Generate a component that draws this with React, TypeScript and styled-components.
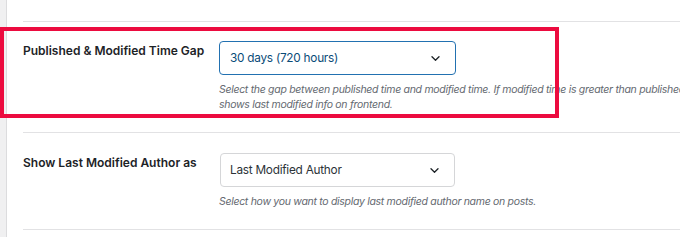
import React from "react";
import styled, { createGlobalStyle } from "styled-components";

const Global = createGlobalStyle`
  html, body { margin: 0; padding: 0; background: #ffffff; overflow: hidden; }
  body { font-family: Inter, "Noto Sans", "Liberation Sans", sans-serif; width: 680px; height: 237px; }
`;

const Page = styled.div`
  position: relative;
  display: flex;
  width: 680px;
  height: 237px;
  overflow: hidden;
`;

const SideStrip = styled.div`
  flex: 0 0 6px;
  background: #f0f0f1;
  border-right: 1px solid #dcdcde;
`;

const Main = styled.div`
  flex: 1;
  padding-left: 16px;
  padding-top: 21px;
  display: flex;
  flex-direction: column;
`;

const Row = styled.div<{ $padTop: number; $padBottom: number }>`
  display: grid;
  grid-template-columns: 196px 1fr;
  border-top: 1px solid #e2e2e4;
  padding-top: ${(p) => p.$padTop}px;
  padding-bottom: ${(p) => p.$padBottom}px;
  &:last-child { border-bottom: 1px solid #e2e2e4; }
`;

const Label = styled.div`
  font-size: 12px;
  font-weight: 600;
  color: #1d2327;
  line-height: 16px;
  padding-top: 2px;
  white-space: nowrap;
`;

const Field = styled.div`
  display: flex;
  flex-direction: column;
  min-width: 0;
`;

const Select = styled.div<{ $active?: boolean }>`
  box-sizing: border-box;
  width: ${(p) => (p.$active ? 237 : 235)}px;
  margin-left: ${(p) => (p.$active ? 0 : 1)}px;
  height: 34px;
  border: 1px solid ${(p) => (p.$active ? "#2271b1" : "#d5d6d8")};
  border-radius: 4px;
  display: flex;
  align-items: center;
  justify-content: space-between;
  padding: 0 15px 0 ${(p) => (p.$active ? 10 : 9)}px;
  font-size: 11.8px;
  letter-spacing: -0.25px;
  color: ${(p) => (p.$active ? "#0a4b78" : "#2c3338")};
  background: #fff;
`;

const Desc = styled.p`
  margin: 7px 0 0 0;
  font-size: 10.5px;
  letter-spacing: -0.3px;
  font-style: italic;
  line-height: 15px;
  color: #646970;
  white-space: nowrap;
`;

const Highlight = styled.div`
  position: absolute;
  left: 0;
  top: 27px;
  width: 559px;
  height: 91px;
  box-sizing: border-box;
  border: 4px solid #ec0b3f;
  pointer-events: none;
`;

const Chevron = () => (
  <svg width="9" height="5" viewBox="0 0 9 5" fill="none">
    <path d="M1 0.8l3.5 3.5 3.5-3.5" stroke="#1d2327" strokeWidth="1.3" strokeLinecap="round" strokeLinejoin="round" />
  </svg>
);

export default function App() {
  return (
    <>
      <Global />
      <Page>
        <SideStrip />
        <Main>
          <Row $padTop={19} $padBottom={20}>
            <Label>Published &amp; Modified Time Gap</Label>
            <Field>
              <Select $active>
                <span>30 days (720 hours)</span>
                <Chevron />
              </Select>
              <Desc>
                Select the gap between published time and modified time. If modified time is greater than published time, then it
                <br />
                shows last modified info on frontend.
              </Desc>
            </Field>
          </Row>
          <Row $padTop={20} $padBottom={20}>
            <Label>Show Last Modified Author as</Label>
            <Field>
              <Select>
                <span>Last Modified Author</span>
                <Chevron />
              </Select>
              <Desc>Select how you want to display last modified author name on posts.</Desc>
            </Field>
          </Row>
        </Main>
        <Highlight />
      </Page>
    </>
  );
}
